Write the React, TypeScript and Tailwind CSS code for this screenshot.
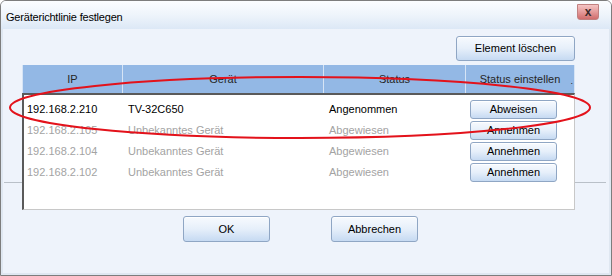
import React from 'react';

const rows = [
  { ip: '192.168.2.210', device: 'TV-32C650', status: 'Angenommen', action: 'Abweisen', active: true },
  { ip: '192.168.2.105', device: 'Unbekanntes Gerät', status: 'Abgewiesen', action: 'Annehmen', active: false },
  { ip: '192.168.2.104', device: 'Unbekanntes Gerät', status: 'Abgewiesen', action: 'Annehmen', active: false },
  { ip: '192.168.2.102', device: 'Unbekanntes Gerät', status: 'Abgewiesen', action: 'Annehmen', active: false },
];

function XpButton({ children, className }: { children: React.ReactNode; className: string }) {
  return (
    <button
      className={`flex items-center justify-center rounded-[3px] border border-[#8fa6c4] bg-gradient-to-b from-[#f7fafe] via-[#e6effa] to-[#c6daf2] text-[11px] text-black shadow-[inset_0_1px_0_#ffffff] ${className}`}
    >
      {children}
    </button>
  );
}

export default function App() {
  return (
    <div
      className="relative flex h-[276px] w-[612px] flex-col overflow-hidden rounded-t-[6px] border border-[#7d7d7d] bg-[#eef3fb] text-[11px]"
      style={{ fontFamily: '"Liberation Sans", Arial, sans-serif' }}
    >
      {/* title bar */}
      <div className="flex h-[28px] shrink-0 items-start justify-between bg-gradient-to-b from-[#fbfdff] via-[#eef4fb] to-[#dce8f6] pl-[5px] pr-[12px]">
        <span className="mt-[8px] text-[11px] tracking-[-0.2px] text-black">Geräterichtlinie festlegen</span>
        <button className="mt-[3px] flex h-[16px] w-[22px] items-center justify-center rounded-b-[3px] border border-[#c08080] bg-gradient-to-b from-[#f4c4c4] via-[#e49a9a] to-[#d06c6c] text-[12px] font-bold leading-none text-[#3a2a2a]">
          x
        </button>
      </div>

      {/* client area */}
      <div className="relative flex flex-1 flex-col border-x-[2px] border-b-[2px] border-[#dfe7f1] pl-[19px] pr-[34px] pt-[7px]">
        {/* separator line behind the list */}
        <div className="absolute left-[1px] right-[3px] top-[153px] h-px bg-[#b9c0c8]" />

        <div className="flex justify-end">
          <XpButton className="h-[25px] w-[119px]">Element löschen</XpButton>
        </div>

        <div className="relative mt-[4px] flex flex-col">
          {/* header */}
          <div className="grid h-[28px] grid-cols-[101px_201px_142px_1fr] bg-[#93b8e5] text-[#262626]">
            <div className="flex items-center justify-center border-l border-r border-[#d6e4f5]">IP</div>
            <div className="flex items-center justify-center border-r border-[#d6e4f5]">Gerät</div>
            <div className="flex items-center justify-center border-r border-[#d6e4f5]">Status</div>
            <div className="relative flex items-center justify-center border-r border-[#d6e4f5]">
              Status einstellen
              <span className="absolute right-[1px] top-[12px] text-[9px] leading-none">.</span>
            </div>
          </div>

          {/* body */}
          <div className="flex h-[117px] flex-col border-b border-l-[2px] border-r border-t-[2px] border-b-[#c8c8c8] border-l-[#5a5a5a] border-r-[#c8c8c8] border-t-[#5a5a5a] bg-white pt-[4px]">
            {rows.map((r) => (
              <div
                key={r.ip}
                className={`grid h-[21px] grid-cols-[99px_201px_142px_1fr] items-center ${r.active ? 'text-black' : 'text-[#a3a3a3]'}`}
              >
                <span className="pl-[3px]">{r.ip}</span>
                <span className="pl-[5px]">{r.device}</span>
                <span className="pl-[5px]">{r.status}</span>
                <div className="pl-[4px]">
                  <XpButton className="h-[19px] w-[87px]">{r.action}</XpButton>
                </div>
              </div>
            ))}
          </div>
        </div>

        <div className="mt-[6px] flex gap-[61px] pl-[161px]">
          <XpButton className="h-[26px] w-[87px]">OK</XpButton>
          <XpButton className="h-[26px] w-[87px]">Abbrechen</XpButton>
        </div>
      </div>

      {/* red annotation ellipse */}
      <svg className="pointer-events-none absolute left-[-1px] top-[-1px]" width="612" height="276">
        <ellipse cx="300" cy="107.5" rx="290" ry="30.5" fill="none" stroke="#e3121b" strokeWidth="2" />
      </svg>
    </div>
  );
}
